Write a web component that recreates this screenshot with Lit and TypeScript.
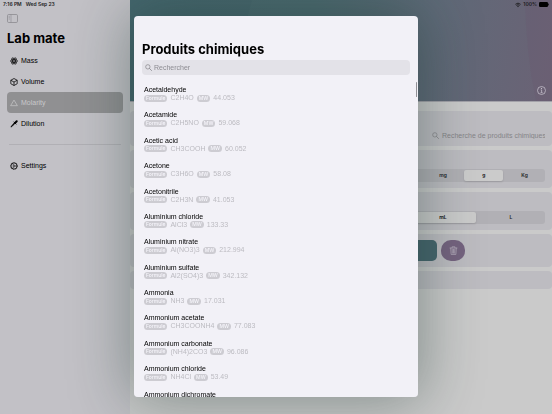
import { LitElement, html, svg, css, nothing } from "lit";
import { customElement, state } from "lit/decorators.js";

const icons = {
  atom: svg`<g fill="none" stroke="currentColor" stroke-width="1.3"><ellipse cx="8" cy="8" rx="7.2" ry="3"/><ellipse cx="8" cy="8" rx="7.2" ry="3" transform="rotate(60 8 8)"/><ellipse cx="8" cy="8" rx="7.2" ry="3" transform="rotate(120 8 8)"/></g><circle cx="8" cy="8" r="1.6" fill="currentColor"/>`,
  cube: svg`<path d="M8 1 14.4 4.5V11.5L8 15 1.6 11.5V4.5ZM1.6 4.5 8 8 14.4 4.5M8 8V15" fill="none" stroke="currentColor" stroke-width="1.5" stroke-linejoin="round"/>`,
  triangle: svg`<path d="M8 2.2 14.8 13.4H1.2Z" fill="none" stroke="currentColor" stroke-width="1.4" stroke-linejoin="round"/>`,
  dropper: svg`<path d="M9 5 10.4 6.4 4 13 1.8 14.2 3 12Z" fill="currentColor" stroke="currentColor" stroke-width="1.2" stroke-linejoin="round"/><path d="M7.8 4 12 8.2" stroke="currentColor" stroke-width="1.8" stroke-linecap="round"/><path d="M10.5 5.5 13.4 2.6" stroke="currentColor" stroke-width="4" stroke-linecap="round"/>`,
  gear: svg`<circle cx="8" cy="8" r="6.2" fill="none" stroke="currentColor" stroke-width="1.6"/><circle cx="8" cy="8" r="7.2" fill="none" stroke="currentColor" stroke-width="1" stroke-dasharray="1.9 1.87"/><circle cx="8" cy="8" r="1.9" fill="none" stroke="currentColor" stroke-width="1.2"/><path d="M10 8H14M7 6 4.9 2.7M7 10 4.9 13.3" stroke="currentColor" stroke-width="1.1"/>`,
  search: svg`<circle cx="6.5" cy="6.5" r="5" fill="none" stroke="currentColor" stroke-width="1.6"/><path d="M10.2 10.2 15 15" stroke="currentColor" stroke-width="1.8" stroke-linecap="round"/>`,
  trash: svg`<g fill="none" stroke="currentColor" stroke-width="1.3" stroke-linecap="round" stroke-linejoin="round"><path d="M1.8 3.6H14.2M5.4 3.4V1.4H10.6V3.4M3 3.8 3.8 15H12.2L13 3.8M8 6V12.8M5.7 6 6 12.8M10.3 6 10 12.8"/></g>`,
  info: svg`<circle cx="8" cy="8" r="7.1" fill="none" stroke="currentColor" stroke-width="1.4"/><circle cx="8" cy="4.4" r="1.1" fill="currentColor"/><path d="M6.6 6.9H8.2V11.8M6.3 11.9H10" fill="none" stroke="currentColor" stroke-width="1.4"/>`,
  wifi: svg`<path d="M8 14 10.4 11.2A3.6 3.6 0 0 0 5.6 11.2Z" fill="currentColor"/><path d="M3.7 9.2A6.2 6.2 0 0 1 12.3 9.2M1.2 6.2A9.8 9.8 0 0 1 14.8 6.2" fill="none" stroke="currentColor" stroke-width="2.4"/>`,
};

const icon = (name: keyof typeof icons) =>
  html`<svg class="icon icon-${name}" viewBox="0 0 16 16" aria-hidden="true">${icons[name]}</svg>`;

const chemicals: [string, string?, string?][] = [
  ["Acetaldehyde", "C2H4O", "44.053"],
  ["Acetamide", "C2H5NO", "59.068"],
  ["Acetic acid", "CH3COOH", "60.052"],
  ["Acetone", "C3H6O", "58.08"],
  ["Acetonitrile", "C2H3N", "41.053"],
  ["Aluminium chloride", "AlCl3", "133.33"],
  ["Aluminium nitrate", "Al(NO3)3", "212.994"],
  ["Aluminium sulfate", "Al2(SO4)3", "342.132"],
  ["Ammonia", "NH3", "17.031"],
  ["Ammonium acetate", "CH3COONH4", "77.083"],
  ["Ammonium carbonate", "(NH4)2CO3", "96.086"],
  ["Ammonium chloride", "NH4Cl", "53.49"],
  ["Ammonium dichromate"],
];

const shared = css`
  * { box-sizing: border-box; }
  button, input { font: inherit; color: inherit; }
  button { border: 0; padding: 0; background: none; display: grid; place-items: center; }
  .icon { display: block; width: 8px; height: 8px; flex: none; }
  .status { display: flex; align-items: center; height: 9px; font-family: Inter, sans-serif; font-size: 5px; font-weight: 600; line-height: 9px; color: #1d1d1f; }
`;

@customElement("side-nav")
class SideNav extends LitElement {
  static styles = [shared, css`
    :host { display: block; background: #c2c1c6; color: #000; padding: 0 7px; }
    .status { gap: 4px; margin-left: -4px; }
    .toggle { margin-top: 5px; width: 11px; height: 9px; color: #8c8c90; }
    .toggle svg { width: 11px; height: 9px; }
    h1 { margin: 4px 0 0; font-family: Inter, sans-serif; font-size: 13px; line-height: 23px; font-weight: 700; color: #000; }
    a { display: flex; align-items: center; gap: 3px; height: 21px; padding: 0 3px; border-radius: 4px; font-size: 7px; color: inherit; text-decoration: none; }
    a.active { background: #909092; color: #c8c8ca; }
    hr { margin: 10px 2px; border: 0; height: 1px; background: #b1b0b5; }
  `];
  render() {
    return html`
      <div class="status"><time>7:16 PM</time><span>Wed Sep 23</span></div>
      <button class="toggle" aria-label="Sidebar">
        <svg viewBox="0 0 11 9"><rect x=".5" y=".5" width="10" height="8" rx="1.2" fill="none" stroke="currentColor" stroke-width=".8"/><path d="M4 .5V8.5M1.6 2.3H2.9M1.6 3.7H2.9M1.6 5.1H2.9" stroke="currentColor" stroke-width=".6"/></svg>
      </button>
      <h1>Lab mate</h1>
      <nav>
        <a href="#mass">${icon("atom")}Mass</a>
        <a href="#volume">${icon("cube")}Volume</a>
        <a href="#molarity" class="active" aria-current="page">${icon("triangle")}Molarity</a>
        <a href="#dilution">${icon("dropper")}Dilution</a>
        <hr>
        <a href="#settings">${icon("gear")}Settings</a>
      </nav>`;
  }
}

@customElement("molarity-form")
class MolarityForm extends LitElement {
  @state() mass = "g";
  @state() volume = "mL";

  static styles = [shared, css`
    :host { display: flex; flex-direction: column; background: #cacaca; }
    header { position: relative; display: flex; flex-direction: column; justify-content: space-between; align-items: flex-end; height: 102px; padding: 0 3px 6px 0; background: linear-gradient(100deg, #486a70 0%, #4d6b71 42%, #5f6a78 70%, #6b6275 100%); overflow: hidden; border-bottom: 1px solid #a3a2a9; }
    .curve { position: absolute; inset: 0; width: 100%; height: 100%; }
    .status { gap: 2px; position: relative; }
    .icon-wifi { width: 6px; height: 6px; }
    .battery { display: block; width: 10px; height: 5px; }
    .info { position: relative; width: 10px; height: 10px; margin-right: 3px; color: #c3bec9; }
    .icon-info, .icon-trash { width: 9px; height: 9px; }
    .cards { display: grid; gap: 4px; padding-top: 9px; }
    .card { background: #bdbcc1; border-radius: 4px; padding: 0 7px 6px; display: flex; align-items: flex-end; justify-content: flex-end; }
    .tall { height: 38px; }
    .find { height: 35px; padding-bottom: 5px; }
    .find label { display: flex; align-items: center; gap: 3px; color: #858488; }
    .find input { width: 103px; height: 11px; border: 0; padding: 0; background: none; font-size: 7px; text-align: right; outline: 0; }
    .find input::placeholder { color: #858488; opacity: 1; }
    .find .icon { width: 7px; height: 7px; }
    fieldset { margin: 0; border: 0; padding: 0; min-width: 0; width: 50%; height: 13px; display: flex; background: #b1b0b5; border-radius: 3px; }
    fieldset label { position: relative; flex: 1; margin: 1px; display: grid; place-items: center; border-radius: 2px; font-family: Inter, sans-serif; font-size: 5px; line-height: 11px; font-weight: 600; color: #1c1c1e; }
    fieldset input { position: absolute; inset: 0; margin: 0; opacity: 0; }
    fieldset label.on { background: #cbcbcb; font-weight: 700; box-shadow: 0 1px 2px #0002; }
    .actions { height: 33px; justify-content: center; gap: 4px; }
    .calc { width: 220px; height: 21px; border-radius: 5px; background: #47666e; }
    .clear { width: 24px; height: 21px; border-radius: 10px; background: #75637f; color: #b4abbb; }
    .result { height: 18px; }
  `];

  private units(name: "mass" | "volume", list: string[]) {
    return html`<fieldset aria-label=${name}>${list.map((u) => html`
      <label class=${this[name] === u ? "on" : ""}>
        <input type="radio" name=${name} .checked=${this[name] === u} @change=${() => (this[name] = u)}>${u}
      </label>`)}</fieldset>`;
  }

  render() {
    return html`
      <header>
        <svg class="curve" viewBox="0 0 422 102" preserveAspectRatio="none" aria-hidden="true">
          <path d="M395 0Q396 54 406 102H422V0Z" fill="#6b4f6b" opacity=".14"/>
          <path d="M0 0H122Q112 30 108 102H0Z" fill="#3c5d68" opacity=".2"/>
        </svg>
        <div class="status">${icon("wifi")}<span>100%</span>
          <svg class="battery" viewBox="0 0 10 5"><rect width="9" height="5" rx="1.2" fill="#000"/><rect x="9.3" y="1.6" width=".7" height="1.8" fill="#000"/></svg>
        </div>
        <button class="info" aria-label="Info">${icon("info")}</button>
      </header>
      <div class="cards">
        <section class="card find"><label>${icon("search")}<input type="text" aria-label="Recherche de produits chimiques" placeholder="Recherche de produits chimiques"></label></section>
        <section class="card tall">${this.units("mass", ["ng", "µg", "mg", "g", "Kg"])}</section>
        <section class="card tall">${this.units("volume", ["µL", "mL", "L"])}</section>
        <section class="card actions">
          <button class="calc" aria-label="Calculate"></button>
          <button class="clear" aria-label="Clear">${icon("trash")}</button>
        </section>
        <section class="card result"></section>
      </div>`;
  }
}

@customElement("chemical-sheet")
class ChemicalSheet extends LitElement {
  static styles = [shared, css`
    :host { position: fixed; inset: 16px 0 17px; display: flex; justify-content: center; pointer-events: none; }
    .frame { display: flex; width: 284px; border-radius: 4px; box-shadow: 0 0 60px 4px #14302866; pointer-events: auto; }
    dialog { position: relative; flex: 1; height: auto; margin: 0; border: 0; border-radius: 4px; padding: 0 8px; background: #f2f1f7; color: #000; overflow: hidden; }
    h2 { margin: 22px 0 0; font-family: Inter, sans-serif; font-size: 13px; line-height: 22px; font-weight: 700; color: #000; }
    .field { display: flex; align-items: center; gap: 2px; height: 15px; padding: 0 3px; border-radius: 4px; background: #e3e2e8; color: #86858b; }
    .field input { flex: 1; min-width: 0; height: 13px; border: 0; padding: 0; background: none; outline: 0; font-size: 7px; }
    .field input::placeholder { color: #8d8c92; opacity: 1; }
    .icon-search { width: 7px; height: 7px; }
    ul { list-style: none; margin: 10px 2px 0; padding: 0; height: 330px; display: grid; grid-template-rows: repeat(13, 1fr); }
    h3 { margin: 0; font-size: 7px; line-height: 9px; font-weight: 400; }
    p { margin: 0; display: flex; align-items: center; gap: 3px; height: 8px; font-size: 7px; line-height: 8px; color: #bcbbc1; }
    .tag { display: grid; place-items: center; height: 7px; min-width: 12px; padding: 0 2px; border-radius: 4px; background: #cdccd2; color: #f6f5fb; font-family: Inter, sans-serif; font-size: 5px; line-height: 7px; font-weight: 500; }
    .thumb { position: absolute; right: 1px; top: 66px; width: 1px; height: 15px; border-radius: 1px; background: #909095; }
  `];
  render() {
    return html`<div class="frame"><dialog open aria-labelledby="title">
      <h2 id="title">Produits chimiques</h2>
      <label class="field">${icon("search")}<input type="text" aria-label="Rechercher" placeholder="Rechercher"></label>
      <ul>${chemicals.map(([name, formula, weight]) => html`
        <li><h3>${name}</h3>${formula ? html`<p><span class="tag">Formule</span><span>${formula}</span><span class="tag">MW</span><span>${weight}</span></p>` : nothing}</li>`)}
      </ul>
      <div class="thumb"></div>
    </dialog></div>`;
  }
}

@customElement("app-root")
class AppRoot extends LitElement {
  static styles = css`
    :host { display: grid; grid-template-columns: 130px 1fr; min-height: 100vh; overflow: hidden; font-family: "Liberation Sans", Arial, sans-serif; }
  `;
  render() {
    return html`<side-nav></side-nav><molarity-form></molarity-form><chemical-sheet></chemical-sheet>`;
  }
}
